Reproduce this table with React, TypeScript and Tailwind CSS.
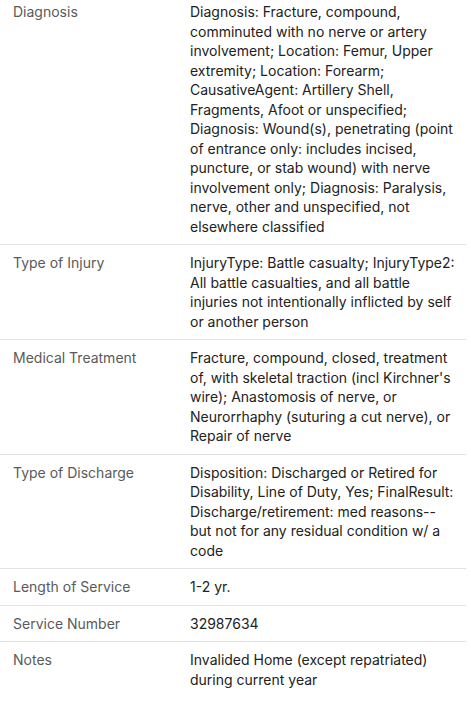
import React from "react";

// lines kept as in the source so wrapping matches
const rows = [
  {
    label: "Diagnosis",
    lines: [
      "Diagnosis: Fracture, compound,",
      "comminuted with no nerve or artery",
      "involvement; Location: Femur, Upper",
      "extremity; Location: Forearm;",
      "CausativeAgent: Artillery Shell,",
      "Fragments, Afoot or unspecified;",
      "Diagnosis: Wound(s), penetrating (point",
      "of entrance only: includes incised,",
      "puncture, or stab wound) with nerve",
      "involvement only; Diagnosis: Paralysis,",
      "nerve, other and unspecified, not",
      "elsewhere classified",
    ],
  },
  {
    label: "Type of Injury",
    lines: [
      "InjuryType: Battle casualty; InjuryType2:",
      "All battle casualties, and all battle",
      "injuries not intentionally inflicted by self",
      "or another person",
    ],
  },
  {
    label: "Medical Treatment",
    lines: [
      "Fracture, compound, closed, treatment",
      "of, with skeletal traction (incl Kirchner's",
      "wire); Anastomosis of nerve, or",
      "Neurorrhaphy (suturing a cut nerve), or",
      "Repair of nerve",
    ],
  },
  {
    label: "Type of Discharge",
    lines: [
      "Disposition: Discharged or Retired for",
      "Disability, Line of Duty, Yes; FinalResult:",
      "Discharge/retirement: med reasons--",
      "but not for any residual condition w/ a",
      "code",
    ],
  },
  { label: "Length of Service", lines: ["1-2 yr."] },
  { label: "Service Number", lines: ["32987634"] },
  {
    label: "Notes",
    lines: ["Invalided Home (except repatriated)", "during current year"],
  },
];

export default function App() {
  return (
    <div className="min-h-screen bg-white font-['Inter',sans-serif] text-[14px] leading-[19.5px]">
      <div className="w-[466px]">
        {rows.map((row, i) => (
          <div
            key={row.label}
            className={
              "grid grid-cols-[190px_1fr] pb-2 " +
              (i === 0 ? "pt-[2px] " : "pt-2 ") +
              (i < rows.length - 1 ? "border-b border-[#e3e3e3]" : "")
            }
          >
            <div className="pl-[13px] text-[#5a5a5a]">{row.label}</div>
            <div className="text-[#222222] whitespace-nowrap">
              {row.lines.map((line) => (
                <div key={line}>{line}</div>
              ))}
            </div>
          </div>
        ))}
      </div>
    </div>
  );
}
